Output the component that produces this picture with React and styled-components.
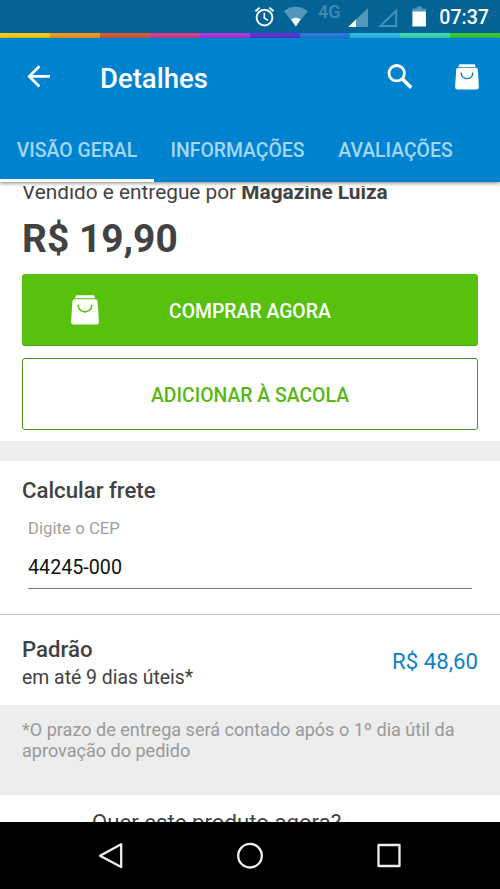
import styled, { createGlobalStyle } from "styled-components";

const stripes = [
  "#f4cf1c",
  "#f29a1f",
  "#d35c3c",
  "#d63f8e",
  "#ae38dc",
  "#5a35d6",
  "#2a7bdc",
  "#2fbbe2",
  "#3adcb4",
  "#3cc63c",
];

const BagIcon = ({ width, height, line }) => (
  <svg width={width} height={height} viewBox="0 0 28 30">
    <path
      d="M5.8 0.2h16.4q1.300 0 1.400 1.200l0.200 1.900h-19.600l0.200-1.900q0.100-1.200 1.400-1.200z"
      fill="#fff"
    />
    <path
      d="M4 4.200h20q2.400 0 2.600 2.100l1.300 20.400q0.100 2.800-2.600 2.800h-22.600q-2.700 0-2.600-2.800l1.300-20.400q0.200-2.100 2.600-2.100z"
      fill="#fff"
    />
    <path
      d="M7.200 10.400c0.600 8.600 13 8.600 13.600 0"
      fill="none"
      stroke={line}
      strokeWidth="1.600"
      strokeLinecap="round"
    />
  </svg>
);

const StatusIcons = () => (
  <svg width="182" height="33" viewBox="250 0 182 33">
    {/* alarm */}
    <g fill="none" stroke="#fff" strokeWidth="1.900">
      <circle cx="264.500" cy="17.600" r="7.900" />
      <path d="M264.300 12.700v5.300l3.700 2.400" strokeWidth="1.600" />
      <path d="M255.400 11.300l4.300-3.700M273.600 11.300l-4.300-3.700" />
    </g>
    {/* wifi */}
    <path d="M283.800 11q12-8.500 24 0l-12 15.400z" fill="#5398bb" />
    <path d="M291.200 19.300q4.700-3 9.400 0l-4.800 7.100z" fill="#fff" />
    {/* signal */}
    <path d="M368 8v19h-19.800z" fill="#5398bb" />
    <path d="M356 19.400v7.600h-7.800z" fill="#fff" />
    <path
      d="M396.200 10.600v15.400h-15.800z"
      fill="none"
      stroke="#4a91b6"
      strokeWidth="1.900"
    />
    {/* battery */}
    <path d="M416.800 6.600h5v1.900h4.200v3.500h-13.600v-3.500h4.400z" fill="#5398bb" />
    <path d="M412.400 11.500h13.600v15h-13.600z" fill="#fff" />
  </svg>
);

const App = () => {
  return (
    <Screen>
      <GlobalStyle />
      <StatusBar>
        <StatusIcons />
        <Network>4G</Network>
        <Clock>07:37</Clock>
      </StatusBar>
      <Rainbow>
        {stripes.map((color) => (
          <Stripe key={color} $color={color} />
        ))}
      </Rainbow>
      <Header>
        <Toolbar>
          <BackIcon width="24" height="24" viewBox="0 0 24 24">
            <path
              d="M23 11.400H3M12.400 1.300L2.300 11.400l10.100 10.100"
              fill="none"
              stroke="#fff"
              strokeWidth="2.700"
            />
          </BackIcon>
          <Title>Detalhes</Title>
          <SearchIcon width="26" height="26" viewBox="0 0 26 26">
            <circle
              cx="9.700"
              cy="9.200"
              r="7.700"
              fill="none"
              stroke="#fff"
              strokeWidth="2.800"
            />
            <path d="M15 14.500l9.200 9.200" stroke="#fff" strokeWidth="3.600" />
          </SearchIcon>
          <BagIcon width={24} height={26} line="#0083cf" />
        </Toolbar>
        <Tabs>
          <Tab $width={154} $active>
            VISÃO GERAL
          </Tab>
          <Tab $width={167}>INFORMAÇÕES</Tab>
          <Tab $width={149}>AVALIAÇÕES</Tab>
        </Tabs>
      </Header>
      <Content>
        <Product>
          <Seller>
            Vendido e entregue por <b>Magazine Luiza</b>
          </Seller>
          <Price>R$ 19,90</Price>
          <BuyButton>
            <BagIcon width={28} height={30} line="#57c10e" />
            <ButtonText $top={4}>COMPRAR AGORA</ButtonText>
          </BuyButton>
          <CartButton>
            <ButtonText $top={2}>ADICIONAR À SACOLA</ButtonText>
          </CartButton>
        </Product>
        <Shipping>
          <Heading>Calcular frete</Heading>
          <Field>
            <Label>Digite o CEP</Label>
            <Value>44245-000</Value>
          </Field>
        </Shipping>
        <Option>
          <div>
            <OptionName>Padrão</OptionName>
            <OptionTime>em até 9 dias úteis*</OptionTime>
          </div>
          <OptionPrice>R$ 48,60</OptionPrice>
        </Option>
        <Note>
          *O prazo de entrega será contado após o 1º dia útil da
          <br />
          aprovação do pedido
        </Note>
        <Pickup>Quer este produto agora?</Pickup>
      </Content>
      <NavBar>
        <svg width="28" height="28" viewBox="0 0 28 28">
          <path d="M24.200 2.300v22.800L3 13.700z" />
        </svg>
        <svg width="28" height="28" viewBox="0 0 28 28">
          <circle cx="14" cy="13.700" r="11.800" />
        </svg>
        <svg width="28" height="28" viewBox="0 0 28 28">
          <rect x="3.500" y="3" width="21" height="21" />
        </svg>
      </NavBar>
    </Screen>
  );
};

const GlobalStyle = createGlobalStyle`
  * {
    box-sizing: border-box;
    margin: 0;
    padding: 0;
  }

  body {
    font-family: Roboto, sans-serif;
    color: #424242;
    background: #fff;
  }
`;

const Screen = styled.div`
  display: flex;
  flex-direction: column;
  width: 500px;
  height: 889px;
  overflow: hidden;
`;

const StatusBar = styled.div`
  display: flex;
  justify-content: flex-end;
  flex: none;
  height: 33px;
  padding-right: 11px;
  background: #036394;
  position: relative;
`;

/* sits over the free gap between the wifi and signal icons */
const Network = styled.span`
  position: absolute;
  left: 318px;
  top: 2px;
  font-size: 18px;
  line-height: 20px;
  font-weight: 500;
  color: #4189b0;
`;

const Clock = styled.span`
  width: 57px;
  text-align: right;
  white-space: nowrap;
  font-size: 19.6px;
  line-height: 35px;
  font-weight: 500;
  color: #fff;
`;

const Rainbow = styled.div`
  display: flex;
  flex: none;
  height: 5px;
`;

const Stripe = styled.div`
  flex: 1;
  background: ${(props) => props.$color};
`;

const Header = styled.header`
  flex: none;
  height: 144px;
  background: #0083cf;
  box-shadow: 0 1px 4px rgba(0, 0, 0, 0.5);
  position: relative;
  z-index: 1;
`;

const Toolbar = styled.div`
  display: flex;
  align-items: center;
  height: 78px;
  padding: 0 21px 0 27px;
`;

const BackIcon = styled.svg`
  margin-right: 49px;
`;

const Title = styled.h1`
  flex: 1;
  font-size: 27.5px;
  line-height: 32px;
  font-weight: 500;
  color: #fff;
  padding-top: 3px;
`;

const SearchIcon = styled.svg`
  margin-right: 42px;
`;

const Tabs = styled.nav`
  display: flex;
  height: 66px;
`;

const Tab = styled.div`
  width: ${(props) => props.$width}px;
  padding-top: 22px;
  text-align: center;
  white-space: nowrap;
  font-size: 19.4px;
  line-height: 26px;
  font-weight: 500;
  color: #a3d7f5;
  border-bottom: 3px solid ${(props) => (props.$active ? "#fff" : "transparent")};
`;

/* the scrolled page starts below the header's shadow */
const Content = styled.main`
  flex: 1;
  min-height: 0;
  margin-top: 4px;
  overflow: hidden;
  background: #fff;
`;

const Product = styled.section`
  display: flow-root;
  height: 275px;
  padding: 0 22px;
  border-bottom: 20px solid #ededed;
`;

const Seller = styled.p`
  margin-top: -7px;
  font-size: 20.8px;
  line-height: 26px;
  white-space: nowrap;
`;

const Price = styled.p`
  margin-top: 11px;
  font-size: 38.9px;
  line-height: 46px;
  font-weight: 700;
`;

const Button = styled.button`
  display: flex;
  align-items: center;
  width: 456px;
  height: 72px;
  font-family: inherit;
  font-size: 19.4px;
  font-weight: 500;
  border-radius: 3px;
`;

const ButtonText = styled.span`
  padding-top: ${(props) => props.$top}px;
`;

const BuyButton = styled(Button)`
  margin-top: 12px;
  padding-left: 49px;
  gap: 70px;
  color: #fff;
  background: #57c10e;
  border: none;
  border-bottom: 1px solid #4bad0b;
`;

const CartButton = styled(Button)`
  margin-top: 12px;
  justify-content: center;
  color: #57b814;
  background: #fff;
  border: 1px solid #4d9420;
`;

const Shipping = styled.section`
  height: 154px;
  padding: 15px 22px 0;
  border-bottom: 1px solid #c4c4c4;
`;

const Heading = styled.h2`
  font-size: 22.2px;
  line-height: 28px;
  font-weight: 500;
`;

const Field = styled.div`
  margin: 14px 6px 0;
  height: 71px;
  border-bottom: 1px solid #7c7c7c;
`;

const Label = styled.label`
  display: block;
  font-size: 16.8px;
  line-height: 20px;
  color: #a0a0a0;
`;

const Value = styled.p`
  margin-top: 17px;
  font-size: 19.7px;
  line-height: 26px;
  color: #111;
`;

const Option = styled.section`
  display: flex;
  justify-content: space-between;
  align-items: center;
  height: 90px;
  padding: 0 22px;
`;

const OptionName = styled.h2`
  padding-top: 7px;
  font-size: 22.2px;
  line-height: 28px;
  font-weight: 500;
`;

const OptionTime = styled.p`
  margin-top: 1px;
  font-size: 19.4px;
  line-height: 28px;
`;

const OptionPrice = styled.p`
  font-size: 22.2px;
  line-height: 28px;
  padding-top: 2px;
  color: #0b83c9;
`;

const Note = styled.p`
  height: 90px;
  padding: 14px 22px 0;
  font-size: 18.06px;
  line-height: 21px;
  white-space: nowrap;
  color: #999;
  background: #ededed;
`;

const Pickup = styled.p`
  padding: 14px 92px 0;
  font-size: 22.2px;
  line-height: 26px;
  white-space: nowrap;
`;

const NavBar = styled.footer`
  display: flex;
  justify-content: space-between;
  align-items: center;
  flex: none;
  height: 67px;
  padding: 0 97px;
  background: #000;

  svg {
    fill: none;
    stroke: #eee;
    stroke-width: 2.3;
    stroke-linejoin: round;
  }
`;

export default App;
